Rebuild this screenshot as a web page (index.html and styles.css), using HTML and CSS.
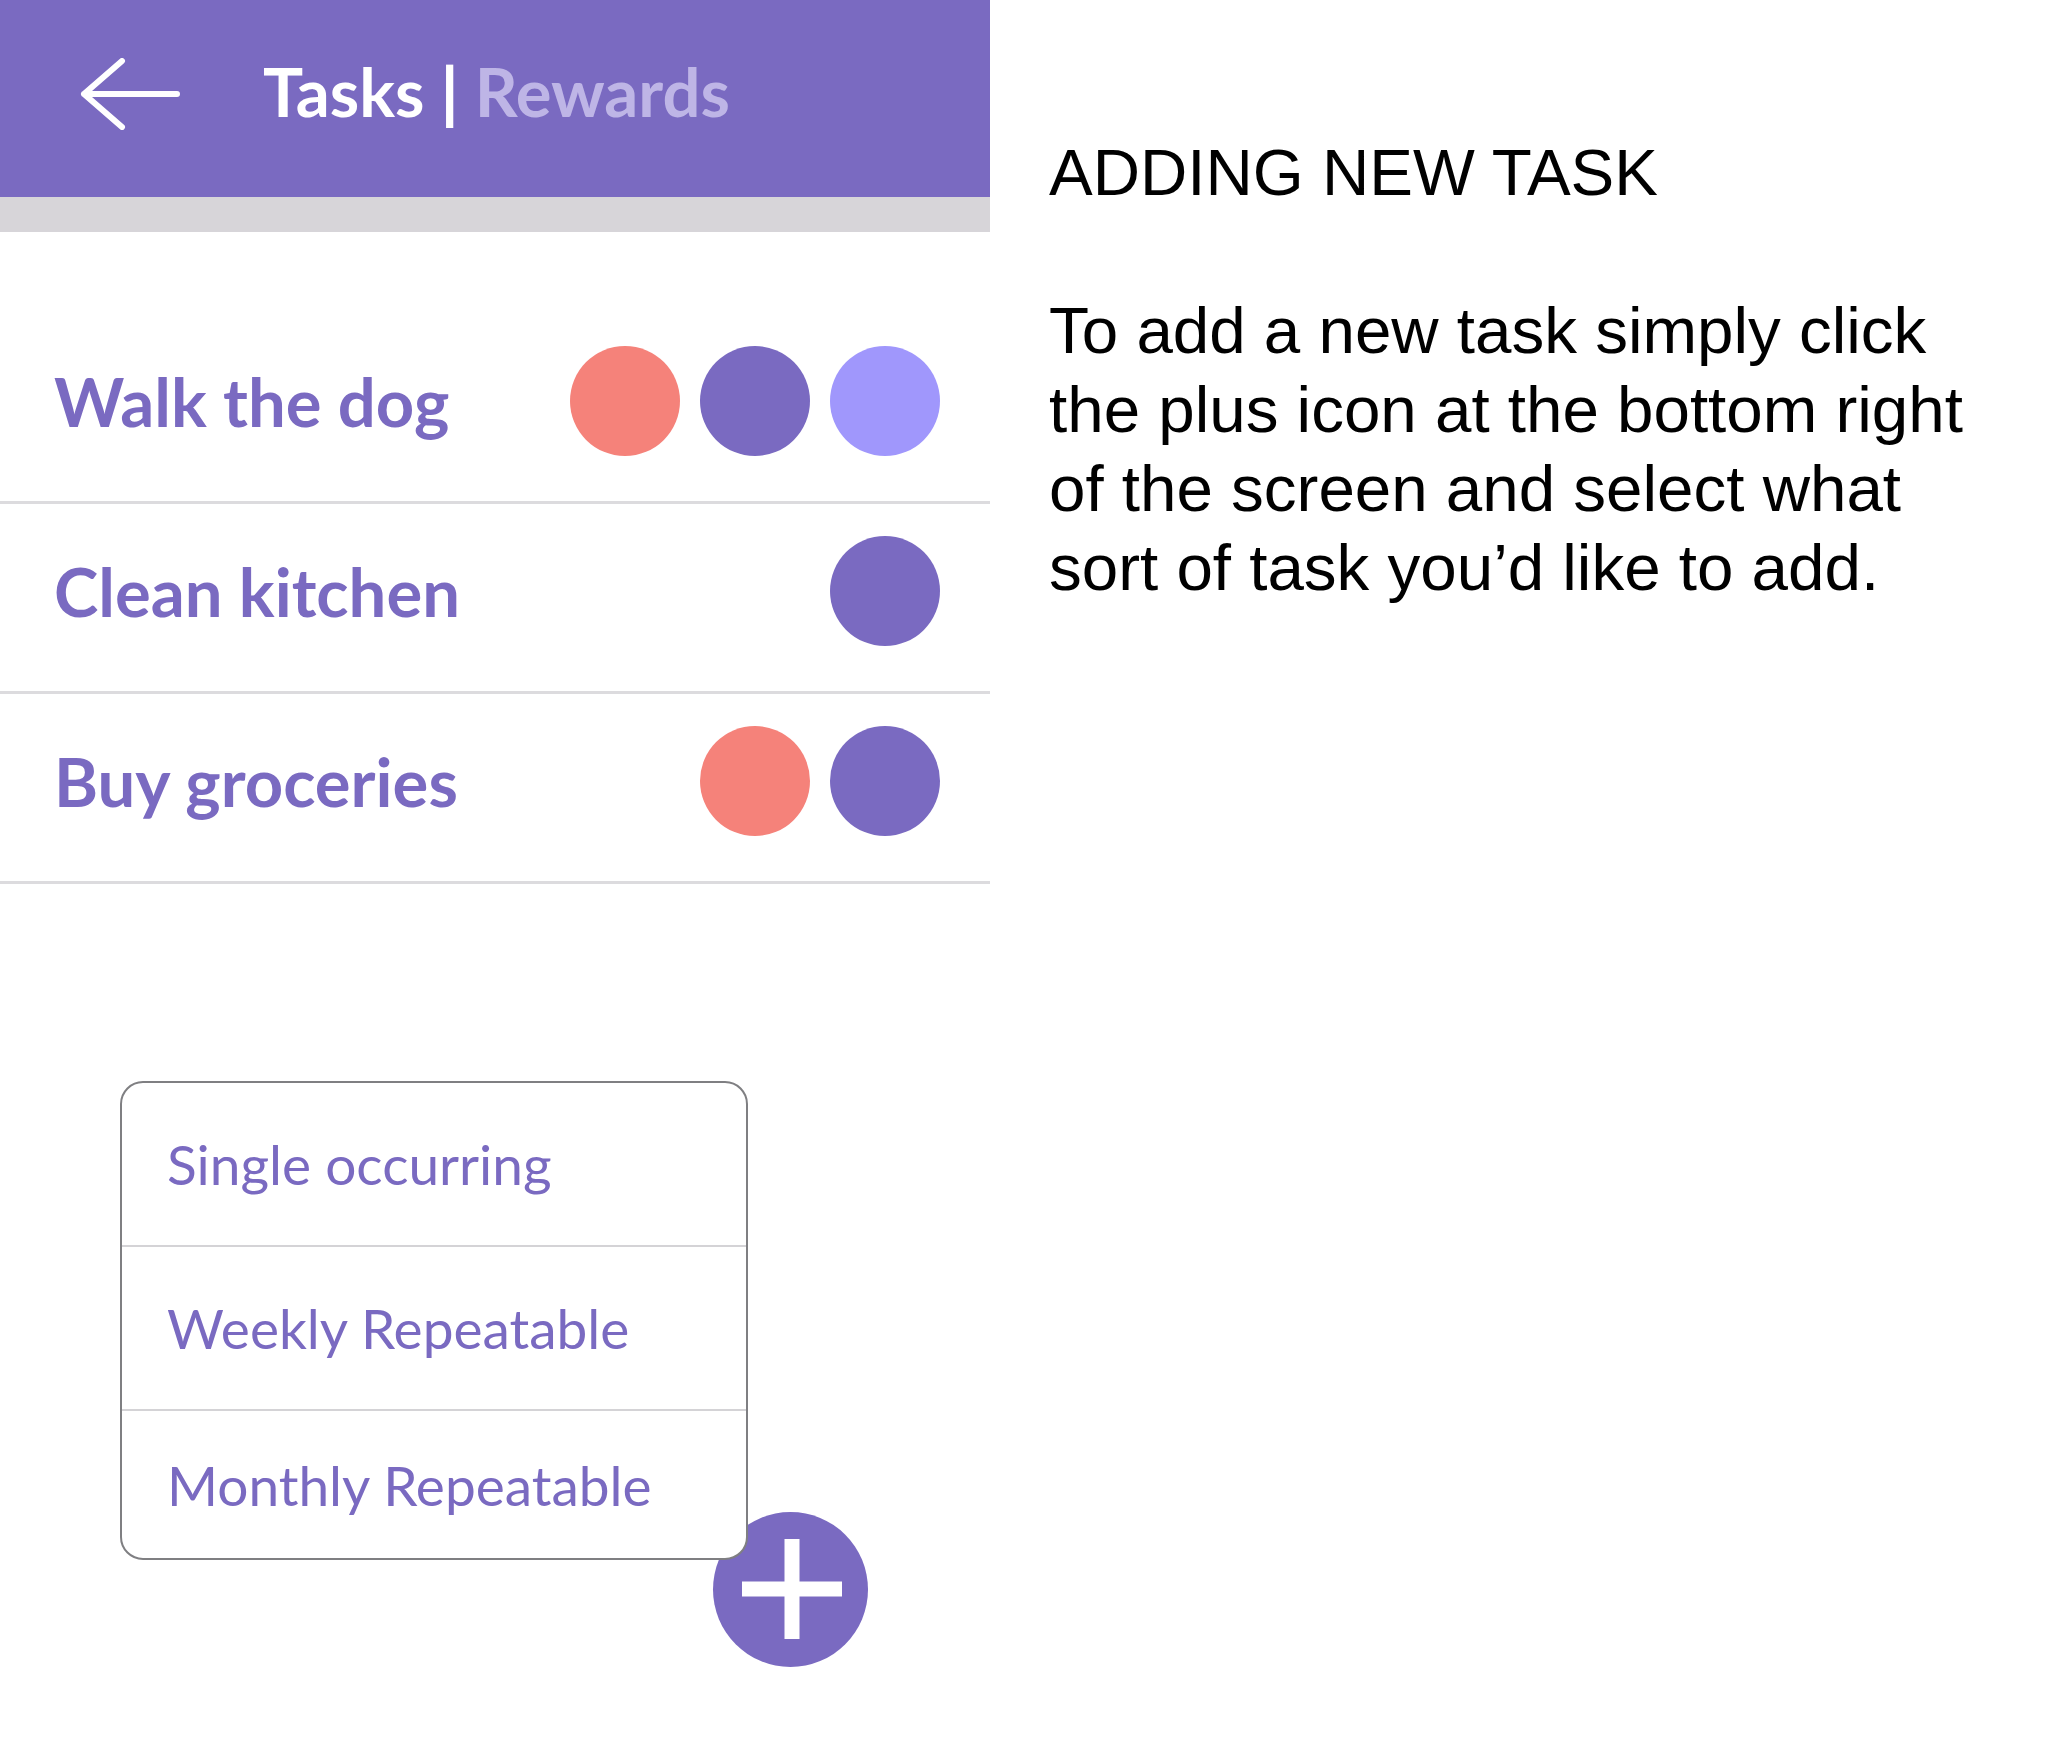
FILE: index.html
```html
<!DOCTYPE html>
<html lang="en">
<head>
    <meta charset="UTF-8">
    <meta name="viewport" content="width=device-width, initial-scale=1.0">
    <title>Adding New Task</title>
    <link rel="stylesheet" href="styles.css">
</head>
<body>
    <div class="page">
        <section class="phone">
            <header class="topbar">
                <svg class="back" width="100" height="72" viewBox="0 0 100 72">
                    <path d="M4 36 H97 M42 3 L4 36 L42 69" fill="none" stroke="#FFFFFF" stroke-width="6" stroke-linecap="round" stroke-linejoin="round"/>
                </svg>
                <h1 class="title">Tasks <span class="pipe">|</span> <span class="dim">Rewards</span></h1>
            </header>
            <div class="strip"></div>

            <ul class="tasks">
                <li class="task">
                    <span class="task-name">Walk the dog</span>
                    <span class="dots">
                        <span class="dot red"></span>
                        <span class="dot purple"></span>
                        <span class="dot lilac"></span>
                    </span>
                </li>
                <li class="task">
                    <span class="task-name">Clean kitchen</span>
                    <span class="dots">
                        <span class="dot purple"></span>
                    </span>
                </li>
                <li class="task">
                    <span class="task-name">Buy groceries</span>
                    <span class="dots">
                        <span class="dot red"></span>
                        <span class="dot purple"></span>
                    </span>
                </li>
            </ul>

            <button class="fab" aria-label="Add task">
                <svg width="100" height="100" viewBox="0 0 100 100">
                    <path d="M0 50 H100 M50 0 V100" stroke="#FFFFFF" stroke-width="15"/>
                </svg>
            </button>

            <div class="menu">
                <div class="menu-item">Single occurring</div>
                <div class="menu-item">Weekly Repeatable</div>
                <div class="menu-item">Monthly Repeatable</div>
            </div>
        </section>

        <section class="info">
            <h2>ADDING NEW TASK</h2>
            <p>To add a new task simply click the plus icon at the bottom right of the screen and select what sort of task you’d like to add.</p>
        </section>
    </div>
</body>
</html>
```

FILE: styles.css
```css
body {
    margin: 0;
    padding: 0;
    background-color: #FFFFFF;
    font-family: Lato, 'Open Sans', sans-serif;
}

.page {
    display: flex;
    align-items: flex-start;
}

.phone {
    position: relative;
    width: 990px;
    height: 1761px;
    flex-shrink: 0;
}

.topbar {
    display: flex;
    align-items: center;
    height: 197px;
    padding-left: 80px;
    box-sizing: border-box;
    background-color: #7A6AC1;
}

.back {
    display: block;
    margin-top: -10px;
}

.title {
    margin: -14px 0 0 83px;
    font-size: 67px;
    font-weight: 700;
    color: #FFFFFF;
    line-height: 1;
    white-space: nowrap;
}

.pipe {
    font-weight: 900;
}

.dim {
    color: #BEB5E6;
}

.strip {
    height: 35px;
    background-color: #D7D5D9;
}

.tasks {
    list-style: none;
    margin: 0;
    padding: 82px 0 0 0;
}

.task {
    display: flex;
    align-items: center;
    justify-content: space-between;
    padding: 32px 50px 45px 54px;
    border-bottom: 3px solid #DCDBDE;
}

.task-name {
    font-size: 67px;
    font-weight: 700;
    color: #7A6AC1;
    line-height: 1;
}

.dots {
    display: flex;
    gap: 20px;
}

.dot {
    width: 110px;
    height: 110px;
    border-radius: 50%;
}

.dot.red {
    background-color: #F5827A;
}

.dot.purple {
    background-color: #7A6AC1;
}

.dot.lilac {
    background-color: #A097FC;
}

/* popup + floating button */
.fab {
    position: absolute;
    left: 713px;
    top: 1512px;
    width: 155px;
    height: 155px;
    padding: 0;
    border: none;
    border-radius: 50%;
    background-color: #7A6AC1;
    display: flex;
    align-items: center;
    justify-content: center;
}

.fab svg {
    display: block;
    margin: -2px 0 0 2px;
}

.menu {
    position: absolute;
    left: 120px;
    top: 1081px;
    width: 628px;
    box-sizing: border-box;
    border: 2px solid #7F7F82;
    border-radius: 23px;
    background-color: #FFFFFF;
    overflow: hidden;
}

.menu-item {
    display: flex;
    align-items: center;
    height: 162px;
    padding-left: 45px;
    font-size: 55px;
    color: #7A6AC1;
    border-bottom: 2px solid #D4D3D6;
}

.menu-item:last-child {
    height: 147px;
    border-bottom: none;
}

.info {
    margin-left: 59px;
    padding-top: 133px;
    width: 950px;
    font-family: 'Liberation Sans', Arial, sans-serif;
    font-size: 65.5px;
    line-height: 79px;
    color: #000000;
}

.info h2 {
    margin: 0 0 79px 0;
    font-size: 65.5px;
    font-weight: 400;
}

.info p {
    margin: 0;
}
```
